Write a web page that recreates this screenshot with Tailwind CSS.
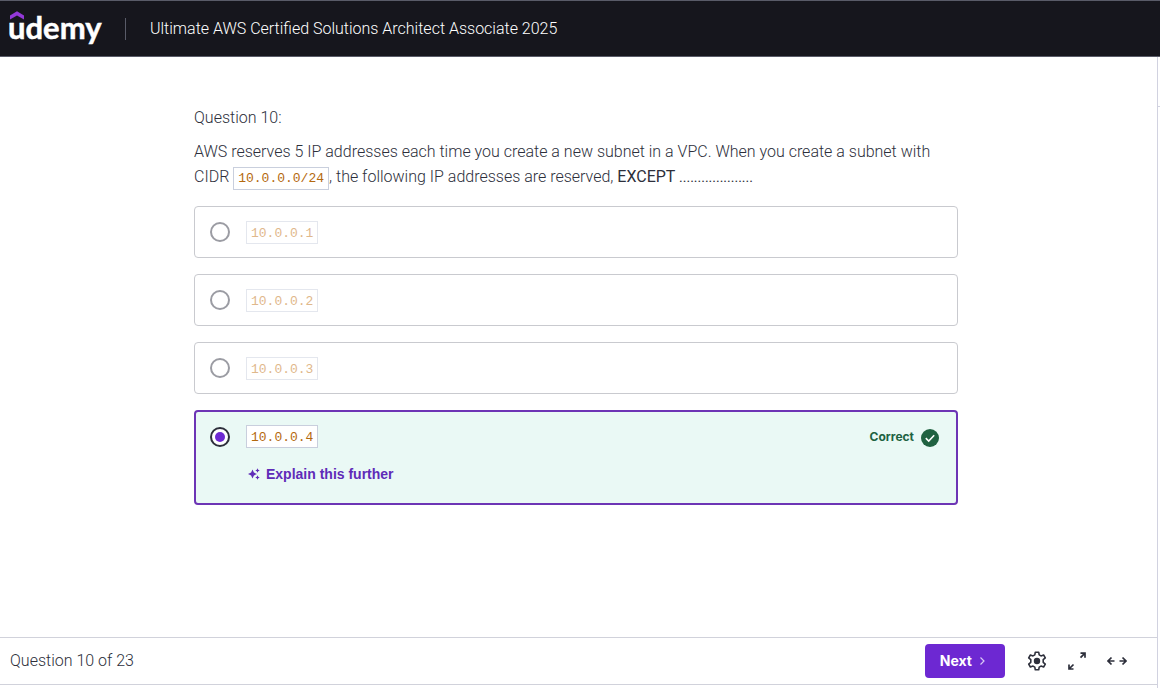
<!DOCTYPE html>
<html lang="en">
<head>
<meta charset="utf-8">
<meta name="viewport" content="width=device-width, initial-scale=1">
<title>Ultimate AWS Certified Solutions Architect Associate 2025</title>
<script src="https://cdn.jsdelivr.net/npm/@tailwindcss/browser@4"></script>
</head>
<body class="flex min-h-screen flex-col bg-white font-['Roboto',sans-serif] text-[#2d2f3b]">
<header class="flex h-[57px] items-center border-y border-[#595b68] bg-[#16161d] pl-2">
  <a href="#" aria-label="udemy" class="block">
    <svg width="96" height="44" viewBox="0 0 96 44">
      <text x="0" y="32" fill="#fff" stroke="#fff" stroke-width="0.5" font-family="Lato, sans-serif" font-weight="700" font-size="31">udemy</text>
      <path d="M2 8.500 9 4.300 16 8.500V12.500L9 8.500 2 12.500Z" fill="#9338d8"/>
    </svg>
  </a>
  <div class="ml-[21px] h-[22px] w-px bg-[#595b68]"></div>
  <h1 class="ml-6 text-base font-light text-white">Ultimate AWS Certified Solutions Architect Associate 2025</h1>
</header>

<div class="flex flex-1">
  <div class="flex flex-1 flex-col border-r border-[#d1d2e0]">
    <main class="flex-1 pr-[5px]">
      <form id="quiz" class="mx-auto max-w-[764px] pt-12">
        <p class="text-base leading-[26px] font-light">Question 10:</p>
        <p class="mt-2 text-base leading-[25px] font-light">AWS reserves 5 IP addresses each time you create a new subnet in a VPC. When you create a subnet with CIDR <code class="border border-[#c9cfdd] bg-white px-1 py-[3px] font-['Liberation_Mono',monospace] text-[13px] font-normal text-[#b4690e]">10.0.0.0/24</code>, the following IP addresses are reserved, <span class="font-normal">EXCEPT <span class="text-sm">....................</span></span></p>
        <ul class="mt-[15px] flex flex-col gap-4">
          <li>
            <label class="flex h-[52px] items-center gap-4 rounded-sm border border-[#c9cacf] px-[15px]">
              <input type="radio" name="answer" disabled class="size-5 appearance-none rounded-full border-2 border-[#9b9ca3]">
              <code class="border border-[#e4e7ee] px-1 pt-0.5 font-['Liberation_Mono',monospace] text-[13px] leading-[19px] text-[#dfb88c]">10.0.0.1</code>
            </label>
          </li>
          <li>
            <label class="flex h-[52px] items-center gap-4 rounded-sm border border-[#c9cacf] px-[15px]">
              <input type="radio" name="answer" disabled class="size-5 appearance-none rounded-full border-2 border-[#9b9ca3]">
              <code class="border border-[#e4e7ee] px-1 pt-0.5 font-['Liberation_Mono',monospace] text-[13px] leading-[19px] text-[#dfb88c]">10.0.0.2</code>
            </label>
          </li>
          <li>
            <label class="flex h-[52px] items-center gap-4 rounded-sm border border-[#c9cacf] px-[15px]">
              <input type="radio" name="answer" disabled class="size-5 appearance-none rounded-full border-2 border-[#9b9ca3]">
              <code class="border border-[#e4e7ee] px-1 pt-0.5 font-['Liberation_Mono',monospace] text-[13px] leading-[19px] text-[#dfb88c]">10.0.0.3</code>
            </label>
          </li>
          <li class="h-[95px] rounded-sm border-2 border-[#6d35b5] bg-[#eaf9f5] px-[14px] pt-[13px]">
            <div class="flex items-center">
              <label class="flex flex-1 items-center gap-4">
                <input type="radio" name="answer" checked class="grid size-5 appearance-none place-items-center rounded-full border-2 border-[#2d2f3b] bg-white before:size-[10px] before:rounded-full before:bg-[#6d28d2]">
                <code class="border border-[#c9cfdd] bg-white px-1 pt-0.5 font-['Liberation_Mono',monospace] text-[13px] leading-[19px] text-[#b4690e]">10.0.0.4</code>
              </label>
              <span class="mr-1.5 font-['Inter',sans-serif] text-xs font-bold text-[#206241]">Correct</span>
              <svg class="mr-0.5" width="20" height="20" viewBox="0 0 20 20"><circle cx="10" cy="11" r="9" fill="#206241"/><path d="M5.800 11.200 8.700 14 14.200 8.300" fill="none" stroke="#fff" stroke-width="1.600"/></svg>
            </div>
            <button type="button" class="mt-4 ml-[38px] flex items-center gap-1.5 font-['Liberation_Sans',sans-serif] text-sm leading-5 font-bold text-[#5f2bb8]">
              <svg width="12" height="12" viewBox="0 0 12 12" fill="currentColor"><path d="M4.500 1.500 5.900 4.600 9 6 5.900 7.400 4.500 10.500 3.100 7.400 0 6 3.100 4.600Z"/><path d="M9.500 0.300 10.200 1.800 11.700 2.500 10.200 3.200 9.500 4.700 8.800 3.200 7.300 2.500 8.800 1.800ZM9.500 7.300 10.200 8.800 11.700 9.500 10.200 10.200 9.500 11.700 8.800 10.200 7.300 9.500 8.800 8.800Z"/></svg>
              Explain this further
            </button>
          </li>
        </ul>
      </form>
    </main>
    <footer class="mb-[3px] flex h-12 items-center border-y border-[#d1d2db] pr-[30px] pl-2.5">
      <p class="flex-1 text-base font-light">Question 10 of 23</p>
      <button type="button" class="flex h-[34px] items-center gap-1 rounded-sm bg-[#6d28d2] px-[15px] font-['Inter',sans-serif] text-sm font-bold text-white">Next
        <svg width="14" height="12" viewBox="0 0 14 12"><path d="M4.500 2.500 8 6 4.500 9.500" fill="none" stroke="#d9c8f5" stroke-width="1.200"/></svg>
      </button>
      <button type="button" aria-label="Settings" class="ml-[22px]">
        <svg width="20" height="20" viewBox="0 0 20 20" fill="none" stroke="#2d2f3b" stroke-width="1.600" stroke-linejoin="round"><path d="M8.300 1.200h3.400l.5 2.700 1.800 1 2.600-.9 1.700 2.900-2.100 1.800v2.600l2.100 1.800-1.700 2.900-2.600-.9-1.800 1-.5 2.700H8.300l-.5-2.700-1.800-1-2.600.9-1.700-2.900 2.100-1.800V8.700L1.700 6.900 3.400 4l2.600.9 1.800-1Z"/><circle cx="10" cy="10" r="2.400" fill="#2d2f3b"/></svg>
      </button>
      <button type="button" aria-label="Fullscreen" class="ml-5">
        <svg width="20" height="20" viewBox="0 0 20 20" fill="none" stroke="#2d2f3b" stroke-width="1.700"><path d="M13.500 2.200h4.500v4.500M18 2.200l-4.500 4.500M2 13.500v4.500h4.500M2 18l4.500-4.500"/></svg>
      </button>
      <button type="button" aria-label="Expanded view" class="ml-5">
        <svg width="20" height="20" viewBox="0 0 20 20" fill="none" stroke="#2d2f3b" stroke-width="1.700"><path d="M4.500 6.500 1 10l3.500 3.500M1 10h6.500M15.500 6.500 19 10l-3.500 3.500M19 10h-6.500"/></svg>
      </button>
    </footer>
  </div>
  <div class="w-0.5"><div class="h-[50px] border-b border-[#d1d2e0]"></div></div>
</div>
</body>
</html>
